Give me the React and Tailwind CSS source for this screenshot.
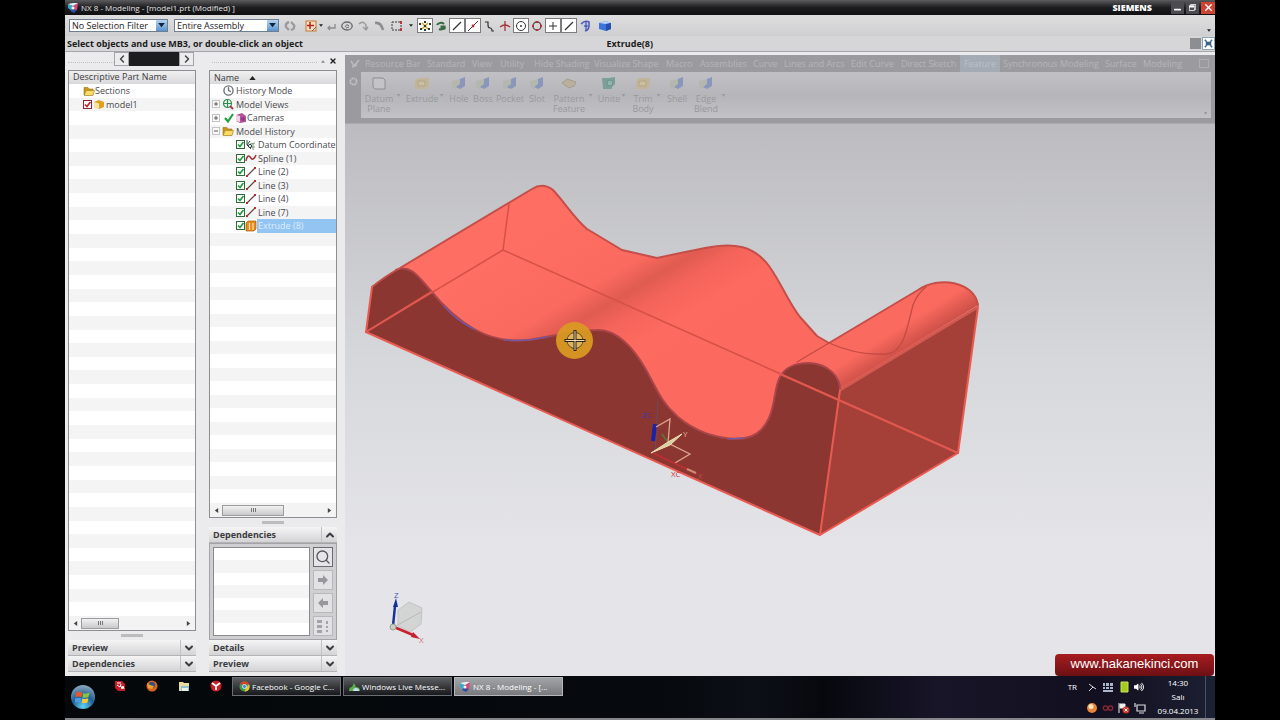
import { useState } from "react";
import {
  FaWindowMinimize,
  FaRegWindowRestore,
  FaVolumeUp,
} from "react-icons/fa";
import { FiChevronDown, FiChevronUp, FiSearch, FiClock, FiX } from "react-icons/fi";

const tabs = [
  { name: "Resource Bar", width: "w-[62px]" },
  { name: "Standard", width: "w-[45px]" },
  { name: "View", width: "w-[28px]" },
  { name: "Utility", width: "w-[34px]" },
  { name: "Hide Shading", width: "w-[60px]" },
  { name: "Visualize Shape", width: "w-[72px]" },
  { name: "Macro", width: "w-[34px]" },
  { name: "Assemblies", width: "w-[53px]" },
  { name: "Curve", width: "w-[31px]" },
  { name: "Lines and Arcs", width: "w-[67px]" },
  { name: "Edit Curve", width: "w-[50px]" },
  { name: "Direct Sketch", width: "w-[59px]" },
  { name: "Feature", width: "w-[40px]", active: true },
  { name: "Synchronous Modeling", width: "w-[102px]" },
  { name: "Surface", width: "w-[38px]" },
  { name: "Modeling", width: "w-[52px]" },
];

const commands = [
  { name: "Datum Plane", icon: "plane", width: "w-[36px]", caret: true },
  { name: "Extrude", icon: "box", width: "w-[36px]", caret: true },
  { name: "Hole", icon: "solid", width: "w-[24px]" },
  { name: "Boss", icon: "solid", width: "w-[24px]" },
  { name: "Pocket", icon: "solid", width: "w-[30px]" },
  { name: "Slot", icon: "solid", width: "w-[24px]" },
  { name: "Pattern Feature", icon: "pattern", width: "w-[40px]", caret: true },
  { name: "Unite", icon: "unite", width: "w-[26px]", caret: true },
  { name: "Trim Body", icon: "box", width: "w-[28px]", caret: true },
  { name: "Shell", icon: "solid", width: "w-[26px]" },
  { name: "Edge Blend", icon: "solid", width: "w-[32px]", caret: true },
];

const historyItems = [
  { name: "Datum Coordinate", icon: "csys" },
  { name: "Spline (1)", icon: "spline" },
  { name: "Line (2)", icon: "line" },
  { name: "Line (3)", icon: "line" },
  { name: "Line (4)", icon: "line" },
  { name: "Line (7)", icon: "line" },
  { name: "Extrude (8)", icon: "extrude" },
];

function NxLogo() {
  return (
    <svg viewBox="0 0 12 12" className="w-3 h-3 shrink-0">
      <path d="M1 2 L6 4 L5 9 L1 6 Z" fill="#39a9c9" />
      <path d="M6 4 L11 1 L10 8 L5 9 Z" fill="#d8447c" />
      <path d="M1 2 L6 1 L11 1 L6 4 Z" fill="#e8eef4" />
      <path d="M5 7 L10 8 L7 11 L3 9 Z" fill="#2d4f9e" />
      <circle cx="6" cy="6" r="1.5" fill="#f4f4f8" />
    </svg>
  );
}

function Folder() {
  return (
    <svg viewBox="0 0 12 12" className="w-3 h-3 shrink-0">
      <path d="M1 2.5h4l1 1.5h4v6H1z" fill="#c9971c" stroke="#9a7418" strokeWidth=".6" />
      <path d="M3 5.5h8.5L10 10.5H1.2z" fill="#f7dc6a" stroke="#a47c1a" strokeWidth=".6" />
    </svg>
  );
}

function Check({ tone = "green", label }) {
  const [on, setOn] = useState(true);
  return (
    <label className="grid shrink-0 w-[9px] h-[9px]">
      <input
        type="checkbox"
        aria-label={label}
        checked={on}
        onChange={() => setOn(!on)}
        className={
          tone === "green"
            ? "appearance-none [grid-area:1/1] w-[9px] h-[9px] border border-[#2f6a3a] bg-white"
            : "appearance-none [grid-area:1/1] w-[9px] h-[9px] border border-[#8c2a34] bg-white"
        }
      />
      {on && (
        <svg viewBox="0 0 9 9" className="[grid-area:1/1] w-[9px] h-[9px] pointer-events-none">
          <path
            d="M2 4.5 L4 6.6 L7.4 2"
            fill="none"
            stroke={tone === "green" ? "#1f9a3c" : "#c4202c"}
            strokeWidth="1.6"
          />
        </svg>
      )}
    </label>
  );
}

function NodeIcon({ type }) {
  return (
    <svg viewBox="0 0 12 12" className="w-3 h-3 shrink-0">
      {type === "csys" && (
        <g fill="none" strokeWidth="1">
          <path d="M2 1v5l4 4M2 6l3-4" stroke="#43484f" />
          <path d="M5 5l5-1M6 8h4M8 5v6" stroke="#7a9a72" />
          <circle cx="5" cy="7" r="1.6" stroke="#33383f" />
        </g>
      )}
      {type === "spline" && (
        <path d="M1 9C2 3 4 3 5.5 5.5S9 8 11 3" fill="none" stroke="#a03038" strokeWidth="1.5" />
      )}
      {type === "line" && (
        <g>
          <path d="M2 10L10 2" stroke="#6a4038" strokeWidth="1.1" />
          <rect x="1" y="9" width="2" height="2" fill="#b02c30" />
          <rect x="9" y="1" width="2" height="2" fill="#b02c30" />
        </g>
      )}
      {type === "extrude" && (
        <g>
          <path d="M1 3l2-2h8v8l-2 2H1z" fill="#e88a1c" stroke="#a85c10" strokeWidth=".7" />
          <path d="M4.5 3v7M8 3v7" stroke="#fbe0b0" strokeWidth="1.2" />
        </g>
      )}
      {type === "views" && (
        <g fill="none" stroke="#2b8f4c" strokeWidth="1.2">
          <circle cx="5.5" cy="5.5" r="4" />
          <path d="M5.5 1v9M1 5.5h9" />
          <path d="M8 8l3 3" stroke="#a83c50" strokeWidth="2" />
        </g>
      )}
      {type === "camera" && (
        <g>
          <path d="M1 3l6-2 4 3v6l-6 1-4-2z" fill="#b8509c" />
          <path d="M1 3l4 1v6L1 9z" fill="#f2d4e8" />
          <circle cx="8" cy="7" r="2" fill="#8c3c84" />
        </g>
      )}
      {type === "part" && (
        <g>
          <path d="M1 4l5-2 5 2v5l-5 2-5-2z" fill="#e0a020" />
          <path d="M1 4l5 1.5V11L1 9z" fill="#fbe6a0" />
        </g>
      )}
      {type === "tick" && <path d="M2 6l3 3.5L10 2" fill="none" stroke="#22a044" strokeWidth="2.2" />}
    </svg>
  );
}

function Expander({ open }) {
  return (
    <button aria-label={open ? "Collapse" : "Expand"} className="w-[8px] h-[8px] shrink-0">
      <svg viewBox="0 0 8 8" className="w-2 h-2">
        <rect x=".5" y=".5" width="7" height="7" fill="#fafafa" stroke="#c4c4c4" />
        <path d={open ? "M2 4h4" : "M2 4h4M4 2v4"} stroke="#5c5c5c" />
      </svg>
    </button>
  );
}

function Rows({ total, children }) {
  const filled = children.length;
  return (
    <ul className="flex-1 flex flex-col min-h-0 text-[9px] leading-[13px] text-[#4a4a4e]">
      {children.map((row, idx) => (
        <li
          key={idx}
          className="flex-1 basis-0 min-h-[12px] flex items-center whitespace-nowrap even:bg-[#f4f4f5] odd:bg-white"
        >
          {row}
        </li>
      ))}
      {Array.from({ length: total - filled }, (_, idx) => (
        <li key={filled + idx} className="flex-1 basis-0 min-h-px even:bg-[#f4f4f5] odd:bg-white" />
      ))}
    </ul>
  );
}

function ScrollBar({ wide }) {
  return (
    <div className="h-[14px] px-1 flex items-center bg-[#f3f3f4] text-[#444]">
      <svg viewBox="0 0 6 6" className="w-[5px] h-[5px]"><path d="M5 0v6L1 3z" fill="currentColor" /></svg>
      <div
        className={
          wide
            ? "ml-[3px] w-[62px] h-[11px] flex items-center justify-center border border-[#9c9c9e] bg-linear-to-b from-[#f2f2f3] to-[#c9c9cb]"
            : "ml-[3px] w-[38px] h-[11px] flex items-center justify-center border border-[#9c9c9e] bg-linear-to-b from-[#f2f2f3] to-[#c9c9cb]"
        }
      >
        <span className="w-[5px] h-[4px] border-x border-[#777] bg-[linear-gradient(90deg,transparent_33%,#777_33%,#777_66%,transparent_66%)]" />
      </div>
      <svg viewBox="0 0 6 6" className="ml-auto w-[5px] h-[5px]"><path d="M1 0v6L5 3z" fill="currentColor" /></svg>
    </div>
  );
}

function Splitter() {
  return (
    <div className="h-[9px] flex items-center justify-center">
      <span className="w-[22px] h-[3px] bg-[#bcbcbe]" />
    </div>
  );
}

function PanelHeader({ title, open }) {
  return (
    <button className="w-full h-4 flex items-center border-b border-[#b4b4b6] bg-linear-to-b from-[#f5f5f6] to-[#d4d4d6] text-[9px] font-bold text-[#3c3c40]">
      <span className="flex-1 pl-1 text-left">{title}</span>
      <span className="w-4 h-full flex items-center justify-center border-l border-[#c2c2c4]">
        {open ? (
          <FiChevronUp className="w-3 h-3" strokeWidth={4} />
        ) : (
          <FiChevronDown className="w-3 h-3" strokeWidth={4} />
        )}
      </span>
    </button>
  );
}

function Combo({ label, value, width }) {
  return (
    <div className={`${width} h-[13px] flex border border-[#6e7f94] bg-white`}>
      <select
        aria-label={label}
        className="flex-1 min-w-0 appearance-none pl-[2px] bg-white text-[9px] leading-[11px] text-[#222]"
      >
        <option>{value}</option>
      </select>
      <span className="w-[11px] flex items-center justify-center bg-linear-to-b from-[#b4d4f2] to-[#5b93cd]">
        <svg viewBox="0 0 8 6" className="w-[7px] h-[5px]"><path d="M0 0h8L4 5z" fill="#10233c" /></svg>
      </span>
    </div>
  );
}

function ToolButton({ label, boxed, children }) {
  return (
    <button
      aria-label={label}
      className={
        boxed
          ? "w-4 h-[15px] flex items-center justify-center border border-[#7c7c80] bg-white"
          : "w-4 h-[15px] flex items-center justify-center"
      }
    >
      <svg viewBox="0 0 12 12" className="w-3 h-3 shrink-0" fill="none" stroke="#333" strokeWidth="1">
        {children}
      </svg>
    </button>
  );
}

function Caret() {
  return (
    <svg viewBox="0 0 6 4" className="w-[4px] h-[3px]"><path d="M0 0h6L3 4z" fill="#222" /></svg>
  );
}

function SelectionBar() {
  return (
    <div className="h-[21px] px-1 flex items-center bg-linear-to-b from-[#dededf] to-[#cfcfd1]">
      <Combo label="Type filter" value="No Selection Filter" width="w-[99px]" />
      <div className="w-[6px]" />
      <Combo label="Selection scope" value="Entire Assembly" width="w-[105px]" />
      <div className="ml-[3px] flex items-center">
        <ToolButton label="Refresh">
          <path d="M5 2q-4 1-3 5l3 3M7 10q4-1 3-5L7 2" stroke="#9b9b9f" strokeWidth="2.4" />
        </ToolButton>
        <div className="w-[5px]" />
        <ToolButton label="Snap options">
          <rect x="1" y="1" width="10" height="10" stroke="#c8782c" fill="#f6dfc0" />
          <path d="M5 2v7M2 5.5h7" stroke="#b02820" strokeWidth="1.5" />
          <path d="M7 11l4-4" stroke="#666" />
        </ToolButton>
        <Caret />
        <ToolButton label="Back">
          <path d="M10 4v4H3M5 6L3 8l2 2" stroke="#8a8a8e" strokeWidth="1.3" />
        </ToolButton>
        <ToolButton label="Show hide">
          <ellipse cx="6" cy="6" rx="5.2" ry="4" stroke="#66686c" strokeWidth="1.3" />
          <path d="M4 7q2-4 4-1M5 8l3-1" stroke="#66686c" />
        </ToolButton>
        <ToolButton label="Undo view">
          <path d="M2 4q4-4 7 1v5M6 7l3 3 2-3" stroke="#9a9a9e" strokeWidth="1.4" />
        </ToolButton>
        <ToolButton label="Redo view">
          <path d="M2 3q6-1 8 7" stroke="#8e8e92" strokeWidth="2.6" />
        </ToolButton>
        <div className="w-[2px]" />
        <ToolButton label="Rectangle select">
          <rect x="1" y="2" width="9" height="8" strokeDasharray="2 1" stroke="#3c3c40" />
          <path d="M10 1v3M10 8v3" stroke="#b8383c" strokeWidth="2" />
        </ToolButton>
        <div className="w-[12px] flex justify-center"><Caret /></div>
        <ToolButton label="Snap points" boxed>
          <path d="M3 3l6 6M9 3L3 9" stroke="#d0a428" strokeWidth="1.5" />
          <g fill="#2c3c2c" stroke="none">
            <rect x="0" y="3" width="2" height="2" /><rect x="5" y="1" width="2" height="2" />
            <rect x="10" y="3" width="2" height="2" /><rect x="1" y="8" width="2" height="2" />
            <rect x="9" y="8" width="2" height="2" /><rect x="5" y="9" width="2" height="2" />
            <rect x="5" y="5" width="2" height="2" />
          </g>
        </ToolButton>
        <ToolButton label="Snap shapes">
          <path d="M2 5a4 3 0 0 1 7-1M10 7a4 3 0 0 1-6 2" stroke="#3a6a44" strokeWidth="2" />
          <rect x="6" y="6" width="4" height="3" fill="#3a6a44" stroke="#3a6a44" />
        </ToolButton>
        <ToolButton label="End point" boxed><path d="M2 10L10 2" strokeWidth="1.3" /></ToolButton>
        <ToolButton label="Mid point" boxed>
          <path d="M1 11L11 1" stroke="#5c3030" /><circle cx="6" cy="6" r="1.4" fill="#b02830" stroke="none" />
        </ToolButton>
        <ToolButton label="Control point"><path d="M2 2h3v3q0 3 2 3t2 3h2" strokeWidth="1.2" /></ToolButton>
        <ToolButton label="Intersection">
          <path d="M1 7q5-4 10 0" stroke="#a83038" strokeWidth="1.3" /><path d="M6 1v10" stroke="#a83038" strokeWidth="1.3" />
        </ToolButton>
        <ToolButton label="Arc center" boxed>
          <circle cx="6" cy="6" r="4.5" /><circle cx="6" cy="6" r="1" fill="#333" stroke="none" />
        </ToolButton>
        <ToolButton label="Quadrant">
          <circle cx="6" cy="6" r="4" stroke="#5c4446" strokeWidth="1.3" />
          <path d="M6 1v2M6 9v2M1 6h2M9 6h2" stroke="#c02c34" strokeWidth="2.2" />
        </ToolButton>
        <ToolButton label="Existing point" boxed><path d="M6 2v8M2 6h8" /></ToolButton>
        <ToolButton label="Point on curve" boxed><path d="M2 10L10 2" strokeWidth="1.3" /></ToolButton>
        <ToolButton label="Point on face">
          <path d="M2 4q4-4 8-2v4q0 4-4 5" stroke="#4a58b4" strokeWidth="1.5" fill="#c4ccf0" />
          <path d="M7 2v8M5 6h4" stroke="#303c90" />
        </ToolButton>
        <div className="w-[4px]" />
        <ToolButton label="Shaded view">
          <path d="M0 3l7-2 5 2v6l-5 2-7-2z" fill="#3c74dc" stroke="none" />
          <path d="M0 3l7-2 5 2-5 1z" fill="#b8d4fa" stroke="none" />
          <path d="M7 4l5-1v6l-5 2z" fill="#2450ac" stroke="none" />
        </ToolButton>
      </div>
      <div className="ml-auto self-end pb-1"><Caret /></div>
    </div>
  );
}

function CommandIcon({ type }) {
  return (
    <svg viewBox="0 0 16 16" className="w-4 h-4">
      {type === "plane" && <path d="M2 3h10l2 2v9H4L2 12z" fill="#c4c4c8" stroke="#8c8c92" />}
      {type === "box" && (
        <g>
          <path d="M1 6l3-3h11v8l-3 3H1z" fill="#c2b69a" />
          <path d="M4 6h7v5H4z" fill="#cbbf9e" stroke="#b0a48c" />
        </g>
      )}
      {type === "solid" && (
        <g>
          <path d="M1 6l8-2v7l-5 3-3-2z" fill="#b3b7ae" />
          <path d="M9 4l5-2v9l-5 3-4-2 4-3z" fill="#8a96bc" />
        </g>
      )}
      {type === "pattern" && (
        <path d="M1 8l5-4 9 3-2 4-5 2z" fill="#bab09c" stroke="#a49c90" />
      )}
      {type === "unite" && (
        <g>
          <path d="M1 3h7l6-1v7l-3 3v2H2z" fill="#7ba09a" />
          <circle cx="9" cy="8" r="3" fill="#93b4ae" stroke="#6c918c" />
        </g>
      )}
    </svg>
  );
}

function Ribbon() {
  return (
    <div className="h-[72px] flex flex-col border-t-3 border-t-[#ebebed] border-b border-b-[#a9a9ad] bg-[#9b9b9f] text-[9px]">
      <nav className="h-[17px] pl-[4px] flex items-center text-[#b5b5b9]">
        <svg viewBox="0 0 12 12" className="w-3 h-3 mr-1 shrink-0"><path d="M2 3l3 5 5-6M3 9l5-2" fill="none" stroke="#bcbcc0" strokeWidth="1.5" /></svg>
        {tabs.map((tab) => (
          <a
            key={tab.name}
            href="#"
            className={`${tab.width} h-full shrink-0 flex items-center whitespace-nowrap ${
              tab.active ? "mr-[3px] justify-center bg-[#a5abb4] text-[#b9c2cc]" : ""
            }`}
          >
            {tab.name}
          </a>
        ))}
        <span className="ml-auto mr-[6px] w-[10px] h-[9px] border border-[#b0b0b4]" />
      </nav>
      <div className="flex-1 flex min-h-0">
        <div className="w-4 pt-[5px] flex justify-center">
          <svg viewBox="0 0 10 10" className="w-[9px] h-[9px]"><circle cx="5" cy="5" r="3.5" fill="none" stroke="#c2c2c6" strokeWidth="2" strokeDasharray="2 .7" /></svg>
        </div>
        <div className="flex-1 mb-[5px] mr-1 flex items-start bg-linear-to-b from-[#c1c1c5] via-[#b6b6ba] to-[#c2c2c6] text-[#98989d]">
          {commands.map((cmd) => (
            <div key={cmd.name} className="flex items-start pt-[3px]">
              <button className={`${cmd.width} flex flex-col items-center`}>
                <CommandIcon type={cmd.icon} />
                <span className="mt-[3px] text-center text-[9px] leading-[10px]">{cmd.name}</span>
              </button>
              {cmd.caret && <span className="w-[7px] pt-[17px] text-[6px] leading-none">▾</span>}
            </div>
          ))}
          <span className="ml-auto mr-1 self-end text-[6px]">▾</span>
        </div>
      </div>
    </div>
  );
}

function Model() {
  return (
    <svg viewBox="345 124 870 552" className="w-full flex-1 min-h-0" fontFamily="Open Sans, sans-serif">
      <defs>
        <linearGradient id="top" gradientUnits="userSpaceOnUse" x1="589" y1="204" x2="691" y2="376">
          <stop offset="0" stopColor="#fe6e62" />
          <stop offset=".36" stopColor="#fb6a5f" />
          <stop offset=".48" stopColor="#e05b51" />
          <stop offset=".58" stopColor="#f4645a" />
          <stop offset=".72" stopColor="#fd6a5f" />
          <stop offset="1" stopColor="#fc6a5f" />
        </linearGradient>
        <linearGradient id="bump" gradientUnits="userSpaceOnUse" x1="884" y1="312" x2="909" y2="352">
          <stop offset="0" stopColor="#fb6a5f" />
          <stop offset=".45" stopColor="#fb6a5f" />
          <stop offset=".85" stopColor="#d4544b" />
          <stop offset="1" stopColor="#c54c44" />
        </linearGradient>
      </defs>

      {/* upper surface */}
      <path
        d="M366 332L372 287Q384 277 400 268L532 189Q543 182 553 190C566 204 574 218 587 229L622 250L657 258Q685 252 705 248C735 242 754 246 769 266C782 284 788 302 800 317L817 336L829 343L918 290C938 276 974 281 978 305L840 390L770 450H700L640 420Z"
        fill="url(#top)"
      />
      <path
        d="M795 364L918 290C938 276 974 281 978 305L840 388Q832 362 795 364Z"
        fill="url(#bump)"
      />
      {/* right side */}
      <path d="M840 390L978 307L958 453L820 535Z" fill="#a54038" />
      <path d="M840 390L978 307" stroke="#d25a50" strokeWidth="3" />
      {/* front profile */}
      <path
        d="M366 332L372 287Q384 277 396 270C410 264 418 276 431 291C444 307 456 319 474 329C492 339 510 342 528 340C556 336 574 330 597 330C617 329 634 349 645 368C657 389 660 401 678 417C696 432 716 438 735 439C754 439 763 431 769 418C776 402 774 388 780 377C786 366 796 363 809 363C828 364 840 376 840 390L820 535Z"
        fill="#8b3630"
      />
      <g fill="none" strokeLinecap="round" strokeLinejoin="round">
        <path
          d="M396 270C410 264 418 276 431 291C444 307 456 319 474 329C492 339 510 342 528 340C556 336 574 330 597 330C617 329 634 349 645 368C657 389 660 401 678 417C696 432 716 438 735 439C754 439 763 431 769 418C776 402 774 388 780 377C786 366 796 363 809 363C828 364 840 376 840 390"
          stroke="#a9454a"
          strokeWidth="2"
        />
        <path d="M444 306C453 317 462 323 474 329M504 340Q522 342 548 337M728 439L744 438" stroke="#7556a0" strokeWidth="1.5" />
        <path
          d="M372 287Q384 277 400 268L532 189Q543 182 553 190C566 204 574 218 587 229L622 250L657 258Q685 252 705 248C735 242 754 246 769 266C782 284 788 302 800 317L817 336L829 343L918 290C938 276 974 281 978 305"
          stroke="#c64e49"
          strokeWidth="2"
        />
        <path d="M372 287L366 332L820 535L958 453L978 307M840 390L820 535" stroke="#e95b52" strokeWidth="2" />
        <path d="M509 204L503 250L366 332M503 250L958 453" stroke="#d65048" strokeWidth="1.5" />
        <path d="M780 374L958 453M431 292L366 332" stroke="#e0584f" strokeWidth="2" />
        <path d="M829 343L797 362M829 343Q858 356 887 354C905 351 907 327 913 305Q917 294 926 287" stroke="#c44a45" strokeWidth="1.3" />
      </g>

      {/* datum coordinate system */}
      <g fill="none">
        <path d="M658 399L655 453" stroke="#6e4a60" />
        <path d="M655 424L653 441" stroke="#1c22a4" strokeWidth="4" />
        <path d="M656 427L670 419L668 443L690 454L675 463" stroke="#dfa58f" strokeWidth="1.3" />
        <path d="M662 434L667 441" stroke="#5a7a3c" strokeWidth="1.5" />
        <path d="M651 453L668 442L682 434L670 445Z" fill="#d9d2a0" stroke="#efe2b4" />
        <path d="M653 453L680 466L697 474" stroke="#c42c34" strokeWidth="1.5" />
        <path d="M687 469L696 473" stroke="#cf8a78" strokeWidth="2" />
      </g>
      <g fontSize="8">
        <text x="642" y="418" fill="#4038b0">ZC</text>
        <text x="683" y="437" fill="#eab8a8">Y</text>
        <text x="671" y="477" fill="#d23640">XC</text>
        <text x="698" y="479" fill="#b8524e">X</text>
      </g>

      {/* pick cursor */}
      <circle cx="574.5" cy="340.5" r="18.5" fill="#d99a22" fillOpacity=".93" />
      <circle cx="575" cy="340.5" r="8" fill="#e0b45c" stroke="#5c4a28" />
      <path d="M575 330V351M564.5 340.5H585.5" stroke="#2c2416" strokeWidth="3" />
      <path d="M575 331V350M565.5 340.5H584.5" stroke="#f2ddb0" strokeWidth="1" />

      {/* view triad */}
      <path d="M398 610L409 602L422 608L421 624L410 632L398 626Z" fill="#d3d4d4" stroke="#c2c3c3" />
      <path d="M394 627L421 612" stroke="#b8b9b6" />
      <path d="M393 626L395 606" stroke="#17309a" strokeWidth="2.5" />
      <path d="M393 607L396 598L398 607Z" fill="#17309a" />
      <path d="M394 627L413 635" stroke="#c9202c" strokeWidth="2.5" />
      <path d="M411 637L420 639L413 632Z" fill="#c9202c" />
      <circle cx="393" cy="627" r="3" fill="#c6cfc0" stroke="#98a090" />
      <text x="394" y="598" fontSize="8" fill="#3d5cb4">Z</text>
      <text x="419" y="643" fontSize="8" fill="#d07078">X</text>
    </svg>
  );
}

function PartPanel() {
  return (
    <section className="w-[128px] shrink-0 flex flex-col">
      <div className="h-[18px] pr-[2px] flex items-start">
        <span className="mt-[10px] flex-1 border-b border-dotted border-[#c0c0c4]" />
        <button aria-label="Scroll left" className="w-[15px] h-[14px] border border-[#a4a4a8] bg-[#ececee] text-[#444]">
          <FiChevronDown className="rotate-90 mx-auto w-3 h-3" strokeWidth={3} />
        </button>
        <span className="w-[50px] h-[14px] bg-[#1d1d1f]" />
        <button aria-label="Scroll right" className="w-[15px] h-[14px] border border-[#a4a4a8] bg-[#ececee] text-[#444]">
          <FiChevronDown className="-rotate-90 mx-auto w-3 h-3" strokeWidth={3} />
        </button>
      </div>
      <div className="flex-1 min-h-0 flex flex-col border border-[#8e8e92] bg-white">
        <h2 className="h-[13px] pl-[4px] bg-linear-to-b from-[#f0f0f1] to-[#d9d9db] text-[9px] leading-[12px] text-[#3c3c40]">
          Descriptive Part Name
        </h2>
        <Rows total={39}>
          {[
            <div key="s" className="pl-[14px] flex items-center"><Folder />Sections</div>,
            <div key="m" className="pl-[14px] flex items-center gap-px">
              <Check tone="red" label="model1" />
              <NodeIcon type="part" />
              model1
            </div>,
          ]}
        </Rows>
        <ScrollBar />
      </div>
      <Splitter />
      <PanelHeader title="Preview" />
      <PanelHeader title="Dependencies" />
    </section>
  );
}

function NavigatorPanel() {
  const rows = [
    <div key="mode" className="pl-[13px] flex items-center gap-[2px]"><FiClock className="w-[11px] h-[11px] text-[#6c7078]" strokeWidth={3} />History Mode</div>,
    <div key="views" className="pl-[2px] flex items-center gap-[2px]"><Expander /><NodeIcon type="views" />Model Views</div>,
    <div key="cams" className="pl-[2px] flex items-center">
      <Expander />
      <span className="w-[3px]" />
      <NodeIcon type="tick" />
      <NodeIcon type="camera" />
      Cameras
    </div>,
    <div key="hist" className="pl-[2px] flex items-center gap-[2px]"><Expander open /><Folder />Model History</div>,
    ...historyItems.map((item) => (
      <div key={item.name} className="pl-[26px] w-full h-full flex items-center">
        <Check label={item.name} />
        <NodeIcon type={item.icon} />
        <span
          className={
            item.icon === "extrude"
              ? "pl-px flex-1 self-stretch bg-[#93c5f3] text-[#dcecfb]"
              : "pl-px flex-1"
          }
        >
          {item.name}
        </span>
      </div>
    )),
  ];

  return (
    <section className="w-[128px] shrink-0 flex flex-col">
      <div className="h-[18px] flex items-start pl-[3px]">
        <span className="mt-[10px] flex-1 border-b border-dotted border-[#c0c0c4]" />
        <svg viewBox="0 0 6 4" className="mx-[4px] mt-[8px] w-[4px] h-[3px]"><path d="M0 4h6L3 0z" fill="#888" /></svg>
        <button aria-label="Close navigator" className="mt-[5px] w-[8px] text-[#222]"><FiX className="w-[8px] h-[8px]" strokeWidth={4} /></button>
      </div>
      <div className="flex-1 min-h-0 flex flex-col border border-[#8e8e92] bg-white">
        <h2 className="h-[13px] pl-[4px] flex items-center gap-[10px] bg-linear-to-b from-[#f0f0f1] to-[#d9d9db] text-[9px] leading-[12px] text-[#3c3c40]">
          Name
          <svg viewBox="0 0 8 5" className="w-[7px] h-[4px]"><path d="M0 5h8L4 0z" fill="#222" /></svg>
        </h2>
        <Rows total={31}>{rows}</Rows>
        <ScrollBar wide />
      </div>
      <Splitter />
      <PanelHeader title="Dependencies" open />
      <div className="h-[97px] p-[3px] flex gap-[3px] border border-[#a4a4a8] bg-[#cfcfd1]">
        <div className="flex-1 flex border border-[#8a8a8e]"><Rows total={7}>{[]}</Rows></div>
        <div className="w-[20px] flex flex-col justify-between">
          <button aria-label="Find" className="h-[20px] flex items-center justify-center border border-[#6c6c70] bg-[#e6e6e8] text-[#55555a]"><FiSearch className="w-4 h-4" /></button>
          <button aria-label="Forward" className="h-[20px] flex items-center justify-center border border-[#b8b8bc] bg-[#e2e2e4]">
            <svg viewBox="0 0 12 12" className="w-3 h-3"><path d="M1 4h5V1l5 5-5 5V8H1z" fill="#98989c" /></svg>
          </button>
          <button aria-label="Back" className="h-[20px] flex items-center justify-center border border-[#b8b8bc] bg-[#e2e2e4]">
            <svg viewBox="0 0 12 12" className="w-3 h-3"><path d="M11 4H6V1L1 6l5 5V8h5z" fill="#98989c" /></svg>
          </button>
          <button aria-label="List" className="h-[20px] flex items-center justify-center border border-[#b8b8bc] bg-[#e2e2e4]">
            <svg viewBox="0 0 14 14" className="w-[14px] h-[14px]" fill="#a4a4a8">
              <rect x="1" y="1" width="5" height="3" /><rect x="1" y="6" width="5" height="3" /><rect x="1" y="11" width="5" height="3" />
              <rect x="10" y="2" width="2" height="3" /><rect x="10" y="7" width="2" height="2" /><rect x="10" y="11" width="2" height="2" />
            </svg>
          </button>
        </div>
      </div>
      <PanelHeader title="Details" />
      <PanelHeader title="Preview" />
    </section>
  );
}

function ChromeIcon() {
  return (
    <svg viewBox="0 0 12 12" className="w-[11px] h-[11px] shrink-0">
      <circle cx="6" cy="6" r="5.5" fill="#3f9c4a" />
      <path d="M1 3.5A5.5 5.5 0 0 1 11 3.5L6 4z" fill="#d8402c" />
      <path d="M11 3.5A5.5 5.5 0 0 1 6 11.5L8 7z" fill="#ecc62c" />
      <circle cx="6" cy="6" r="2.2" fill="#4c84d8" stroke="#fff" strokeWidth=".8" />
    </svg>
  );
}

function Taskbar() {
  return (
    <footer className="h-[44px] flex border-b-2 border-[#85868a] bg-[linear-gradient(90deg,#05080b_0%,#06090d_52%,#0c0f16_60%,#07080e_66%,#181528_76%,#120f20_90%,#1c2032_100%)] text-white">
      <button aria-label="Start" className="w-[36px] flex items-center justify-center">
        <svg viewBox="0 0 26 26" className="w-[26px] h-[26px]">
          <defs>
            <radialGradient id="orb" cx=".5" cy=".9" r=".9">
              <stop offset="0" stopColor="#5fd4f2" />
              <stop offset=".5" stopColor="#1f5f96" />
              <stop offset="1" stopColor="#8fa8bc" />
            </radialGradient>
          </defs>
          <circle cx="13" cy="13" r="12" fill="url(#orb)" />
          <path d="M6 9q3-2 6-.5L11.5 13q-3-1.2-6 .2z" fill="#e8582c" />
          <path d="M13 9q3 1.5 6.5-.5L18.5 13q-3 1.500-6 .3z" fill="#8cc43c" />
          <path d="M5 14.5q3-1.5 6-.2L10.5 18.5q-3-1.200-5.5.2z" fill="#4c9ce4" />
          <path d="M12.3 14.5q3 1.3 6-.2L17.5 18.5q-3 1.500-5.7.2z" fill="#f6c83c" />
        </svg>
      </button>
      <div className="pt-[4px] pl-[13px] w-[131px] flex gap-[20px]">
        <button aria-label="SolidWorks" className="h-3">
          <svg viewBox="0 0 12 12" className="w-3 h-3"><path d="M1 1h7l3 3v7H4L1 8z" fill="#c41c28" /><path d="M3 3h4M3 5l3 2 1-3M7 6l1 3 1-3 1 3" stroke="#fff" fill="none" /></svg>
        </button>
        <button aria-label="Firefox" className="h-3">
          <svg viewBox="0 0 12 12" className="w-3 h-3"><circle cx="6" cy="6" r="5.5" fill="#d8641c" /><circle cx="6" cy="5" r="3" fill="#28508c" /><path d="M1 3l3 2 4 1-2 3-4-1z" fill="#f2a02c" /></svg>
        </button>
        <button aria-label="Explorer" className="h-3">
          <svg viewBox="0 0 12 12" className="w-3 h-3"><path d="M1 2h4l1 1h5v8H1z" fill="#e8dc9c" /><path d="M3 6h8v5H3z" fill="#8cc0d4" /><path d="M4 8h6v3H4z" fill="#e8f0e8" /></svg>
        </button>
        <button aria-label="Yandex" className="h-3">
          <svg viewBox="0 0 12 12" className="w-3 h-3"><circle cx="6" cy="6" r="5.5" fill="#cc1c24" /><path d="M2 3l4 3 4-3M6 6v4" stroke="#fff" strokeWidth="1.8" fill="none" /></svg>
        </button>
      </div>
      <div className="pt-px flex gap-[2px] text-[8px] leading-[18px] whitespace-nowrap">
        <button className="w-[109px] h-[19px] px-[6px] flex items-center gap-[2px] border border-[#6c6e72] bg-linear-to-b from-[#5c5e62] to-[#17191d]">
          <ChromeIcon />Facebook - Google C...
        </button>
        <button className="w-[109px] h-[19px] px-[4px] flex items-center gap-[2px] border border-[#6c6e72] bg-linear-to-b from-[#5c5e62] to-[#17191d]">
          <svg viewBox="0 0 12 12" className="w-3 h-3 shrink-0"><path d="M1 10q0-4 3-4l2-4 2 4q4 0 4 4z" fill="#5cae4c" /><path d="M5 10q0-3 3-3t3 3z" fill="#c4e0f0" /></svg>
          Windows Live Messe...
        </button>
        <button className="w-[109px] h-[19px] px-[4px] flex items-center gap-[2px] border border-[#b4b6ba] bg-linear-to-b from-[#a2a4a8] to-[#77797d]">
          <NxLogo />NX 8 - Modeling - [...
        </button>
      </div>
      <div className="ml-auto flex text-[8px]">
        <span className="mt-[5px] mr-[9px] leading-3">TR</span>
        <div className="pt-[5px] mr-[13px] grid grid-cols-4 gap-x-[4px] gap-y-[9px] content-start">
          <svg viewBox="0 0 12 12" className="w-3 h-3"><path d="M3 3l4 3-4 4M7 6l3 2" stroke="#ddd" fill="none" /></svg>
          <svg viewBox="0 0 12 12" className="w-3 h-3"><path d="M1 2h2v3H1zM4 2h3v3H4zM8 2h3v3H8zM1 6h2v2H1zM4 6h3v2H4zM8 6h3v2H8zM1 9h10v2H1z" fill="#aab6cc" /></svg>
          <svg viewBox="0 0 12 12" className="w-3 h-3"><path d="M3 1h7v10H3z" fill="#a4cc1c" stroke="#c8e060" /></svg>
          <FaVolumeUp className="w-[10px] h-3" />
          <svg viewBox="0 0 12 12" className="w-3 h-3"><circle cx="6" cy="6" r="5" fill="#e8843c" /><circle cx="5" cy="4.5" r="2.5" fill="#fbe8b8" /></svg>
          <svg viewBox="0 0 12 12" className="w-3 h-3"><circle cx="3.5" cy="6" r="2.2" fill="none" stroke="#8c2838" strokeWidth="1.3" /><circle cx="8.5" cy="6" r="2.2" fill="none" stroke="#8c2838" strokeWidth="1.3" /></svg>
          <svg viewBox="0 0 12 12" className="w-3 h-3"><path d="M1 1v10M2 2h5v4H2z" stroke="#eee" fill="#eee" /><circle cx="8" cy="8" r="3.5" fill="#cc3428" /><path d="M6.5 6.5l3 3m0-3l-3 3" stroke="#fff" /></svg>
          <svg viewBox="0 0 12 12" className="w-3 h-3"><path d="M3 3h8v6H3zM5 11h5M1 1v4" stroke="#ddd" fill="none" strokeWidth="1.2" /></svg>
        </div>
        <div className="w-[38px] flex flex-col items-center text-[8px] leading-[14px] whitespace-nowrap">
          <span>14:30</span>
          <span>Salı</span>
          <span>09.04.2013</span>
        </div>
        <button aria-label="Show desktop" className="ml-[8px] w-[10px] border-l border-[#4c5064] bg-[#1c2034]" />
      </div>
    </footer>
  );
}

export default function App() {
  return (
    <div className="min-h-screen px-[65px] flex flex-col bg-black font-['Open_Sans',sans-serif]">
      {/* Title bar */}
      <header className="h-[15px] pl-[2px] flex items-center gap-[2px] bg-linear-to-b from-[#5c5c5e] via-[#1e1e20] to-[#101012] text-[#e4e4e6]">
        <NxLogo />
        <h1 className="text-[8px] leading-none">NX 8 - Modeling - [model1.prt (Modified) ]</h1>
        <span className="ml-auto mr-[17px] text-[9px] font-extrabold text-white">SIEMENS</span>
        <div className="flex gap-[2px] text-[7px] text-white">
          <button aria-label="Minimize" className="w-[13px] h-[12px] flex items-center justify-center bg-[#4c4c50]"><FaWindowMinimize /></button>
          <button aria-label="Restore" className="w-[13px] h-[12px] flex items-center justify-center bg-[#4c4c50]"><FaRegWindowRestore /></button>
          <button aria-label="Close" className="w-[14px] h-[12px] flex items-center justify-center bg-[#cc4434] text-[11px]"><FiX strokeWidth={3} /></button>
        </div>
      </header>

      <SelectionBar />

      {/* Cue and status line */}
      <div className="h-[16px] pl-[2px] flex items-center border-b border-[#a6a6aa] bg-[#d6d6d8] text-[9px] font-bold text-[#1c1c20]">
        <p className="w-[47%]">Select objects and use MB3, or double-click an object</p>
        <p className="flex-1">Extrude(8)</p>
        <span className="w-[11px] h-[11px] bg-[#8c8e92]" />
        <button aria-label="Full screen" className="ml-[1px] w-[13px] h-[13px] border border-[#8aa4b8] bg-white">
          <svg viewBox="0 0 12 12" className="w-[11px] h-[11px]"><path d="M2 2l2 2M10 2L8 4M2 10l2-2M10 10L8 8" stroke="#3c6484" strokeWidth="1.5" /><rect x="3" y="4" width="6" height="4" fill="#3c6484" /></svg>
        </button>
      </div>

      <main className="flex-1 pl-[3px] flex bg-[#ebebed]">
        <div className="flex gap-[13px] pb-1">
          <PartPanel />
          <NavigatorPanel />
        </div>
        <div className="relative ml-2 flex-1 min-w-0 flex flex-col bg-linear-to-b from-[#bbbbbf] from-10% via-[#d7d8dc] via-50% to-[#e5e5e9] to-80%">
          <Ribbon />
          <Model />
          <a
            href="#"
            className="absolute bottom-0 right-px w-[159px] h-[22px] rounded-[4px] bg-linear-to-b from-[#a81c20] to-[#6c1014] text-center text-[13px] leading-[20px] text-white font-['Liberation_Sans',sans-serif]"
          >
            www.hakanekinci.com
          </a>
        </div>
      </main>

      <Taskbar />
    </div>
  );
}
